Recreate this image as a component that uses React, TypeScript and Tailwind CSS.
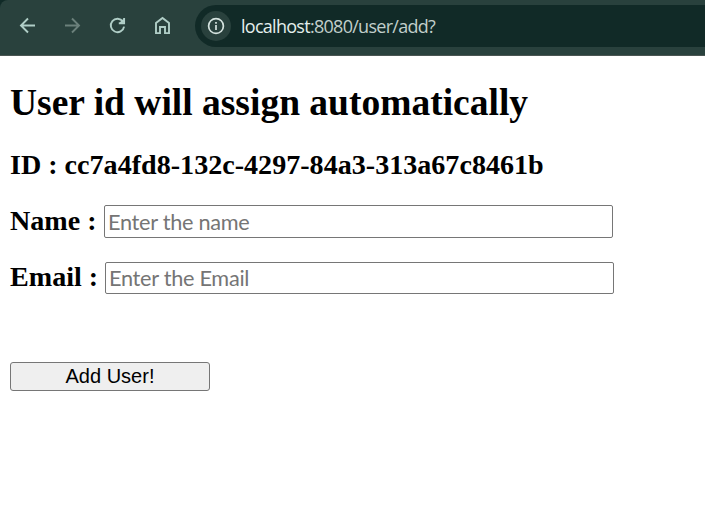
const icon = "fill-none stroke-[#b0cec7]";

function BrowserBar() {
  return (
    <div className="bg-[#102a27]">
      <header className="flex h-14 items-start rounded-tl-lg border-b border-[#4a5552] bg-[#29413d] pt-[5px]">
        <nav className="flex h-[42px] w-[195px] shrink-0 items-center gap-[21px] pl-4">
          <svg className={icon} width="24" height="24" viewBox="0 0 24 24" strokeWidth="1.9">
            <path d="M19 11.5H5M12 4.5L5 11.5L12 18.5" />
          </svg>
          <svg className="fill-none stroke-[#6b807b]" width="24" height="24" viewBox="0 0 24 24" strokeWidth="1.9">
            <path d="M4 11.5H18M11 4.5L18 11.5L11 18.5" />
          </svg>
          <svg className={icon} width="24" height="24" viewBox="0 0 24 24" strokeWidth="1.9">
            <path d="M17 7.6A6.7 6.7 0 1 0 18.1 12.6M18.1 4V9.2H12.8M14.5 9L18 5.8" />
          </svg>
          <svg className={icon} width="24" height="24" viewBox="0 0 24 24" strokeWidth="1.9">
            <path d="M5 19.1V8.9L11.5 4L18 8.9V19.1H14V13H9V19.1Z" />
          </svg>
        </nav>
        <div className="flex h-[42px] grow items-center rounded-l-full bg-[#112a27] pl-1.5">
          <span className="flex size-[30px] items-center justify-center rounded-full bg-[#29413d]">
            <svg width="18" height="18" viewBox="0 0 18 18" className="fill-none stroke-[#d5e3df]" strokeWidth="1.7">
              <circle cx="9" cy="9" r="7.4" />
              <path d="M9 8V13M9 5V6.7" />
            </svg>
          </span>
          <span className="ml-[10px] whitespace-pre font-['Open_Sans',sans-serif] text-[18px] leading-6 tracking-[-0.72px] text-[#c1cfcb]">
            <span className="text-[#e4efec]">localhost</span>:8080/user/add?
          </span>
        </div>
      </header>
    </div>
  );
}

const field =
  "w-[509px] rounded-[2px] border border-[#767676] bg-white px-[3px] py-0 font-['Lato',sans-serif] text-[21.7px] tracking-[-0.28px] font-normal placeholder:text-[#757575] placeholder:opacity-100 outline-none";

export default function App() {
  return (
    <div className="h-[523px] overflow-hidden bg-white text-black">
      <BrowserBar />
      <main className="flex flex-col items-start pl-[10px] pt-[25px] font-['Liberation_Serif',serif] font-bold">
        <h1 className="whitespace-nowrap text-[37.5px] leading-[44px]">User id will assign automatically</h1>
        <h3 className="mt-6 whitespace-nowrap text-[28.1px] leading-8">ID : cc7a4fd8-132c-4297-84a3-313a67c8461b</h3>
        <label className="mt-6 flex h-[33px] items-center text-[28.1px] leading-8">
          <span className="w-[94px] whitespace-nowrap pb-0.5">Name :</span>
          <input className={`${field} h-[33px]`} placeholder="Enter the name" />
        </label>
        <label className="mt-6 flex h-8 items-center text-[28.1px] leading-8">
          <span className="w-[95px] whitespace-nowrap pb-0.5">Email :</span>
          <input className={`${field} h-8`} placeholder="Enter the Email" />
        </label>
        <button className="mt-[68px] h-[29px] w-[200px] rounded-[3px] border border-[#767676] bg-[#efefef] pb-0.5 font-['Liberation_Sans',sans-serif] text-[20px] font-normal leading-none">
          Add User!
        </button>
      </main>
    </div>
  );
}
